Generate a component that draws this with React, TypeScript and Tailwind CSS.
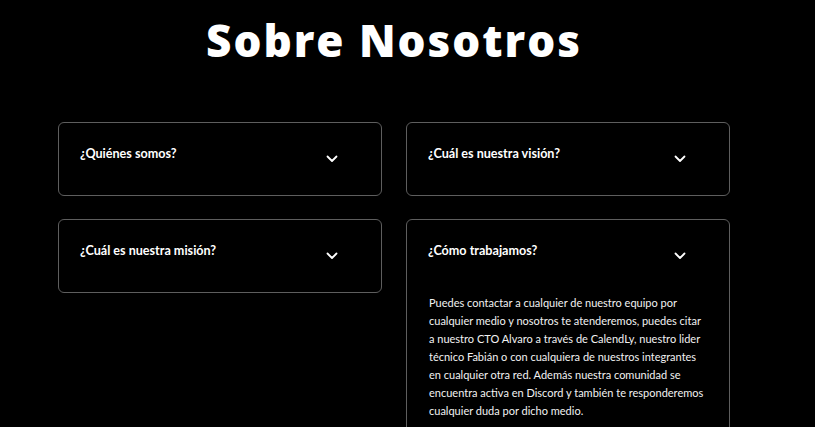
import React, { useState } from "react";

const ITEMS = [
  { id: 1, title: "¿Quiénes somos?", body: "" },
  { id: 2, title: "¿Cuál es nuestra visión?", body: "" },
  { id: 3, title: "¿Cuál es nuestra misión?", body: "" },
  {
    id: 4,
    title: "¿Cómo trabajamos?",
    body: "Puedes contactar a cualquier de nuestro equipo por cualquier medio y nosotros te atenderemos, puedes citar a nuestro CTO Alvaro a través de CalendLy, nuestro lider técnico Fabián o con cualquiera de nuestros integrantes en cualquier otra red. Además nuestra comunidad se encuentra activa en Discord y también te responderemos cualquier duda por dicho medio.",
  },
];

function Chevron() {
  return (
    <svg width="12" height="8" viewBox="0 0 12 8" fill="none">
      <path d="M1.5 1.5 L6 6 L10.5 1.5" stroke="white" strokeWidth="1.8" strokeLinecap="round" strokeLinejoin="round" />
    </svg>
  );
}

export default function App() {
  const [open, setOpen] = useState<number | null>(4);

  return (
    <div className="min-h-screen bg-black text-white font-['Lato',sans-serif] overflow-hidden">
      <div className="w-[788px]">
        {/* Heading */}
        <h1 className="text-center text-[44px] font-['Open_Sans',sans-serif] font-extrabold tracking-[0.045em] leading-none pt-[18px]">
          Sobre Nosotros
        </h1>

        {/* Accordion grid */}
        <div className="grid grid-cols-2 gap-x-6 gap-y-[23px] w-[672px] mx-auto mt-[60px] items-start">
          {ITEMS.map((item) => {
            const isOpen = open === item.id;
            return (
              <div key={item.id} className="border border-[#5e5e5e] rounded-md">
                <button
                  onClick={() => setOpen(isOpen ? null : item.id)}
                  className="w-full h-[72px] flex items-center justify-between pl-[21px] pr-[43px] text-left"
                >
                  <span className="text-[12.6px] font-bold mb-[10px]">{item.title}</span>
                  <Chevron />
                </button>
                {isOpen && item.body && (
                  <p className="px-[22px] pb-4 pt-[2px] text-[11px] leading-[18px] text-[#f2f2f2]">
                    {item.body}
                  </p>
                )}
              </div>
            );
          })}
        </div>
      </div>
    </div>
  );
}
